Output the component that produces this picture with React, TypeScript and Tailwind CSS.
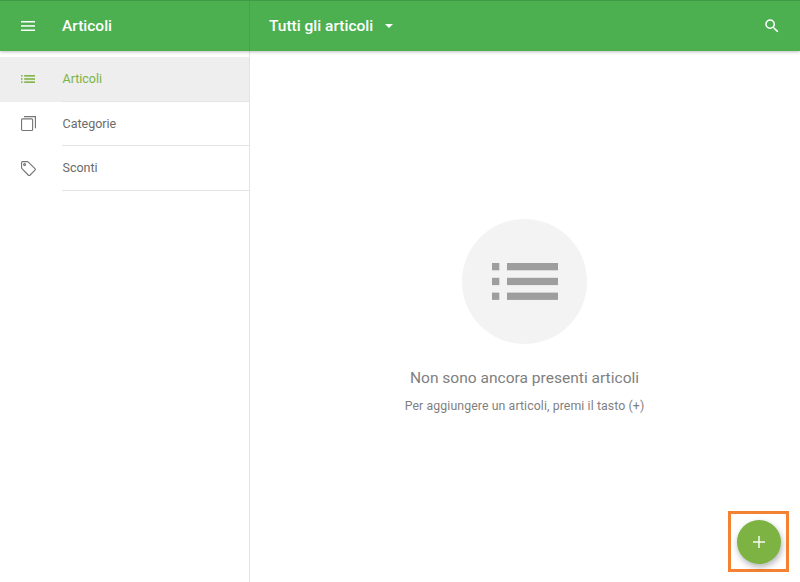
import { ReactNode } from 'react';

const font = { fontFamily: 'Roboto, sans-serif' };

function ListIcon({ className }: { className: string }) {
  return (
    <svg viewBox="0 0 66 37" className={className} fill="currentColor">
      <rect x="0" y="0" width="7.3" height="7.3" />
      <rect x="15" y="0" width="51" height="7.3" />
      <rect x="0" y="14.8" width="7.3" height="7.3" />
      <rect x="15" y="14.8" width="51" height="7.3" />
      <rect x="0" y="29.6" width="7.3" height="7.3" />
      <rect x="15" y="29.6" width="51" height="7.3" />
    </svg>
  );
}

function CopyIcon() {
  return (
    <svg viewBox="0 0 16 16" className="w-[15px] h-[15px] text-[#757575]" fill="none" stroke="currentColor" strokeWidth="1.2">
      <rect x="0.6" y="3.1" width="11.8" height="12.3" rx="1" />
      <path d="M3.2 0.6h12.2v12.4" />
    </svg>
  );
}

function TagIcon() {
  return (
    <svg viewBox="0 0 16 16" className="w-[15px] h-[15px] text-[#757575]" fill="none" stroke="currentColor" strokeWidth="1.2">
      <path d="M1.6 0.7h5.2c.4 0 .7.1 1 .4l7.1 7.1c.5.5.5 1.1 0 1.6l-5.4 5.4c-.5.5-1.1.5-1.6 0L1 8.1c-.3-.3-.4-.6-.4-1V1.7c0-.6.4-1 1-1z" />
      <circle cx="3.8" cy="3.8" r="1" />
    </svg>
  );
}

function NavRow({ icon, label, active }: { icon: ReactNode; label: string; active?: boolean }) {
  return (
    <div className={`flex h-[44.5px] items-stretch ${active ? 'bg-[#eeeeee]' : ''}`}>
      <div className="w-[62px] flex items-center justify-start pl-[21px] shrink-0">{icon}</div>
      <div
        className={`flex-1 flex items-center pt-[2px] pl-[0.5px] text-[12.5px] border-b border-[#e4e4e4] ${
          active ? 'text-[#7cb342]' : 'text-[#6b6b6b]'
        }`}
      >
        {label}
      </div>
    </div>
  );
}

export default function App() {
  return (
    <div className="w-[800px] h-[582px] bg-white flex flex-col overflow-hidden relative" style={font}>
      <header className="h-[51px] shrink-0 bg-[#4caf50] border-t border-[#3f9a45] flex items-stretch text-white shadow-[0_1px_3px_rgba(0,0,0,0.25)] z-10">
        <div className="w-[250px] shrink-0 flex items-center border-r border-[#47a34b]">
          <svg viewBox="0 0 14 10" className="w-[14px] h-[10px] ml-[21px]" fill="currentColor">
            <rect y="0" width="14" height="1.5" />
            <rect y="4.2" width="14" height="1.5" />
            <rect y="8.5" width="14" height="1.5" />
          </svg>
          <span className="ml-[27px] pt-[2px] text-[15.5px] font-medium">Articoli</span>
        </div>
        <div className="flex-1 flex items-center pl-[19px] pr-[19px]">
          <span className="pt-[2px] text-[15.5px] font-medium">Tutti gli articoli</span>
          <svg viewBox="0 0 8 4" className="w-2 h-1 ml-[12px]" fill="currentColor">
            <path d="M0 0h8L4 4z" />
          </svg>
          <svg viewBox="0 0 24 24" className="w-[18px] h-[18px] ml-auto" fill="currentColor">
            <path d="M15.5 14h-.79l-.28-.27A6.47 6.47 0 0 0 16 9.5 6.5 6.5 0 1 0 9.5 16c1.61 0 3.09-.59 4.23-1.57l.27.28v.79l5 4.99L20.49 19l-4.99-5zm-6 0C7.01 14 5 11.99 5 9.5S7.01 5 9.5 5 14 7.01 14 9.5 11.99 14 9.5 14z" />
          </svg>
        </div>
      </header>

      <div className="flex-1 flex min-h-0">
        <aside className="w-[250px] shrink-0 border-r border-[#e4e4e4] pt-[6px]">
          <NavRow active label="Articoli" icon={<ListIcon className="w-[14px] h-[8px] text-[#7cb342]" />} />
          <NavRow label="Categorie" icon={<CopyIcon />} />
          <NavRow label="Sconti" icon={<TagIcon />} />
        </aside>

        <main className="flex-1 flex flex-col items-center pt-[168px] pr-[1px]">
          <div className="w-[125px] h-[125px] rounded-full bg-[#f3f3f3] flex items-center justify-center">
            <ListIcon className="w-[66px] h-[37px] text-[#9e9e9e]" />
          </div>
          <p className="mt-[24px] text-[15.55px] leading-[20px] text-[#7f7f7f]">Non sono ancora presenti articoli</p>
          <p className="mt-[9px] text-[12.3px] leading-[18px] tracking-[0.1px] text-[#7f7f7f]">Per aggiungere un articoli, premi il tasto (+)</p>
        </main>
      </div>

      {/* fab with the orange highlight box */}
      <div className="absolute left-[728px] top-[511px] w-[61px] h-[61px] border-[3px] border-[#f58233] flex items-center justify-center">
        <button className="ml-[1px] w-[44px] h-[44px] rounded-full bg-[#7cb342] text-white flex items-center justify-center shadow-[1px_3px_6px_rgba(0,0,0,0.3)]">
          <svg viewBox="0 0 12 12" className="w-3 h-3" fill="currentColor">
            <rect x="5.3" y="0" width="1.4" height="12" />
            <rect x="0" y="5.3" width="12" height="1.4" />
          </svg>
        </button>
      </div>
    </div>
  );
}
